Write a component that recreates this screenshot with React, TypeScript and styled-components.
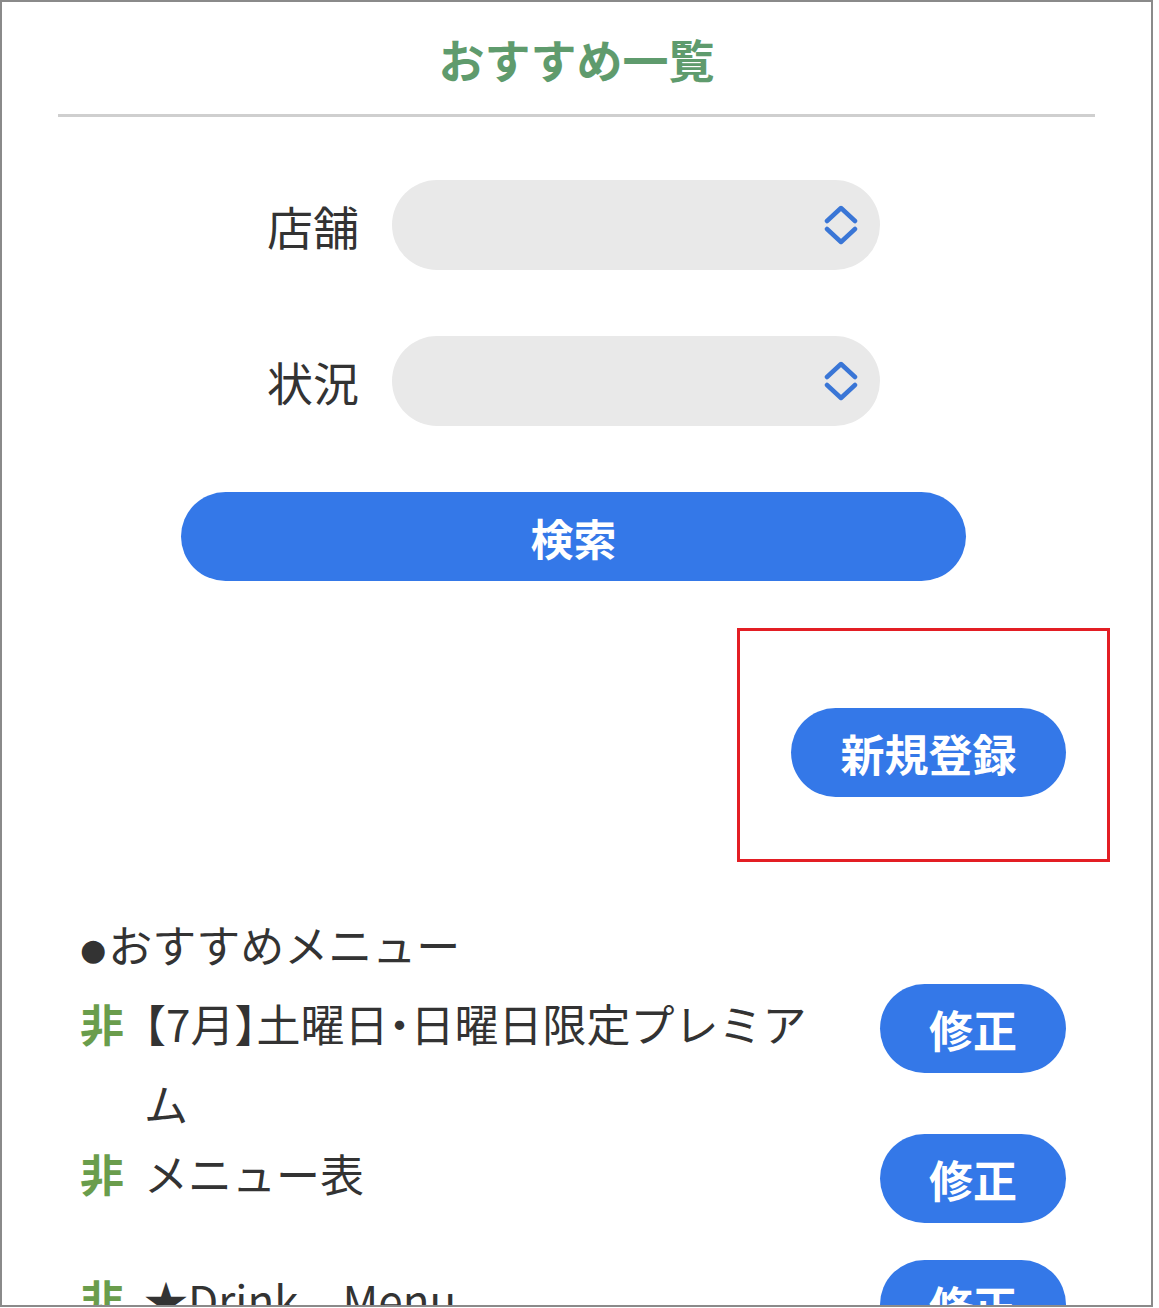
import styled, { createGlobalStyle } from "styled-components";

type RecommendItem = { title: string };

const items: RecommendItem[] = [
  { title: "【7月】土曜日・日曜日限定プレミアム" },
  { title: "メニュー表" },
  { title: "★Drink　Menu" },
];

const GlobalStyle = createGlobalStyle`
  html, body {
    margin: 0;
    padding: 0;
    background: #ffffff;
  }
  body {
    font-family: "Noto Sans CJK JP", "Noto Sans", sans-serif;
    color: #333333;
  }
  * {
    box-sizing: border-box;
  }
`;

const Frame = styled.div`
  width: 1153px;
  height: 1307px;
  border: 2px solid #8a8a8a;
  overflow: hidden;
  background: #ffffff;
`;

const Title = styled.h1`
  margin: 24px 0 24px;
  font-size: 46px;
  line-height: 64px;
  font-weight: 700;
  text-align: center;
  color: #5f9b6d;
`;

const Divider = styled.hr`
  margin: 0 56px;
  border: none;
  height: 3px;
  background: #cfcfcf;
`;

const SearchForm = styled.div`
  display: flex;
  flex-direction: column;
  align-items: center;
  gap: 66px;
  padding-top: 63px;
  padding-right: 6px;
`;

const FieldRow = styled.div`
  display: flex;
  align-items: center;
  gap: 33px;
`;

const FieldLabel = styled.label`
  font-size: 46px;
  line-height: 64px;
  color: #333333;
`;

const SelectBox = styled.div`
  width: 488px;
  height: 90px;
  border-radius: 45px;
  background: #e9e9e9;
  display: flex;
  align-items: center;
  justify-content: flex-end;
  padding-right: 22px;
`;

const SearchButton = styled.button`
  width: 785px;
  height: 89px;
  border: none;
  border-radius: 45px;
  background: #3478e8;
  color: #ffffff;
  font-family: inherit;
  font-size: 43px;
  font-weight: 700;
`;

const RegisterArea = styled.div`
  display: flex;
  justify-content: flex-end;
  padding-right: 41px;
  margin-top: 47px;
`;

const HighlightBox = styled.div`
  border: 3px solid #e31e24;
  padding: 77px 41px 62px 51px;
`;

const PillButton = styled.button<{ $width: number }>`
  width: ${(p) => p.$width}px;
  height: 89px;
  flex-shrink: 0;
  border: none;
  border-radius: 45px;
  background: #3478e8;
  color: #ffffff;
  font-family: inherit;
  font-size: 44px;
  font-weight: 700;
  padding: 0;
`;

const ListSection = styled.div`
  padding: 0 85px 0 78px;
  margin-top: 49px;
`;

const ListHeading = styled.div`
  font-size: 44px;
  line-height: 66px;
  height: 66px;
  color: #333333;
  margin-bottom: 7px;
`;

const Bullet = styled.span`
  font-family: "DejaVu Sans", sans-serif;
  font-size: 30px;
  line-height: 0;
  margin-right: 2px;
  vertical-align: 3px;
`;

const ItemRow = styled.div`
  display: flex;
  align-items: flex-start;
  margin-bottom: 37px;
`;

const HiddenMark = styled.span`
  font-size: 44px;
  font-weight: 700;
  line-height: 78px;
  color: #6a9d4c;
  width: 48px;
  margin-right: 16px;
  flex-shrink: 0;
`;

const ItemTitle = styled.div`
  flex: 1;
  font-size: 44px;
  line-height: 80px;
  margin-top: -1px;
  margin-bottom: -46px;
  margin-right: 46px;
  color: #333333;
  font-feature-settings: "halt";
`;

const ChevronIcon = () => (
  <svg width="34" height="40" viewBox="0 0 34 40" fill="none">
    <path
      d="M3 16 L17 3 L31 16"
      stroke="#3a76d6"
      strokeWidth="4.5"
      strokeLinecap="round"
      strokeLinejoin="round"
    />
    <path
      d="M3 24 L17 37 L31 24"
      stroke="#3a76d6"
      strokeWidth="4.5"
      strokeLinecap="round"
      strokeLinejoin="round"
    />
  </svg>
);

const SelectField = ({ label }: { label: string }) => (
  <FieldRow>
    <FieldLabel>{label}</FieldLabel>
    <SelectBox>
      <ChevronIcon />
    </SelectBox>
  </FieldRow>
);

export default function App() {
  return (
    <>
      <GlobalStyle />
      <Frame>
        <Title>おすすめ一覧</Title>
        <Divider />
        <SearchForm>
          <SelectField label="店舗" />
          <SelectField label="状況" />
          <SearchButton>検索</SearchButton>
        </SearchForm>
        <RegisterArea>
          <HighlightBox>
            <PillButton $width={275}>新規登録</PillButton>
          </HighlightBox>
        </RegisterArea>
        <ListSection>
          <ListHeading>
            <Bullet>●</Bullet>おすすめメニュー
          </ListHeading>
          {items.map((item) => (
            <ItemRow key={item.title}>
              <HiddenMark>非</HiddenMark>
              <ItemTitle>{item.title}</ItemTitle>
              <PillButton $width={186}>修正</PillButton>
            </ItemRow>
          ))}
        </ListSection>
      </Frame>
    </>
  );
}
